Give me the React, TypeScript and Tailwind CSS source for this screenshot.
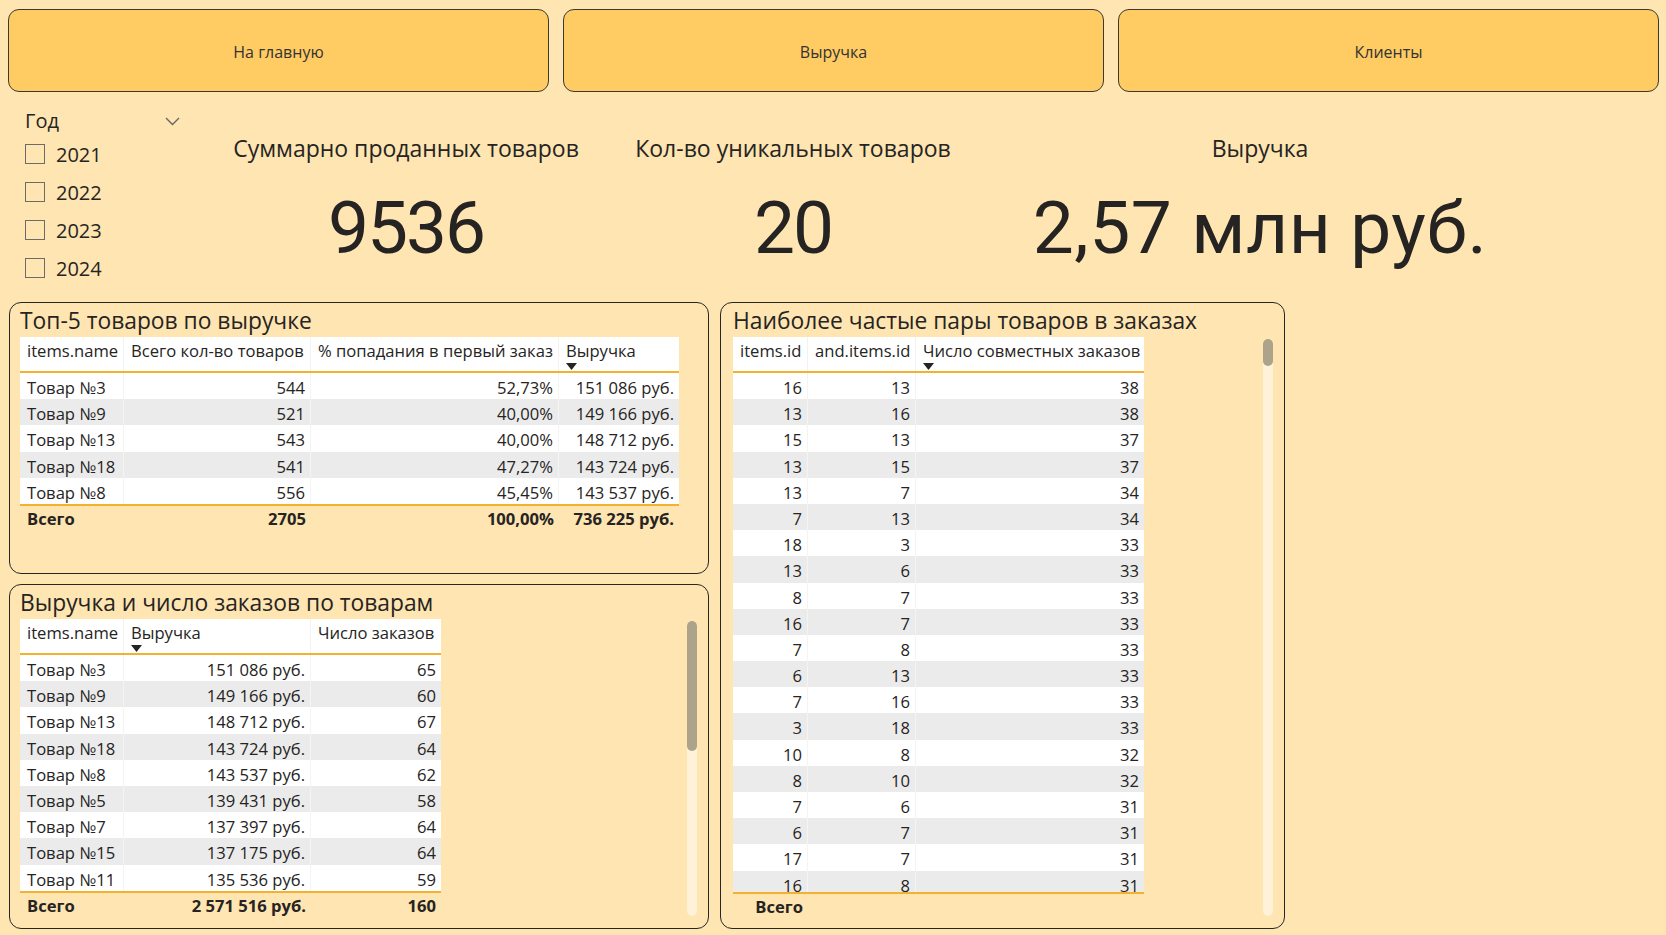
import React from "react";

type Col = { align: "l" | "r" };

const top5 = [
  ["Товар №3", "544", "52,73%", "151 086 руб."],
  ["Товар №9", "521", "40,00%", "149 166 руб."],
  ["Товар №13", "543", "40,00%", "148 712 руб."],
  ["Товар №18", "541", "47,27%", "143 724 руб."],
  ["Товар №8", "556", "45,45%", "143 537 руб."],
];

const revenue = [
  ["Товар №3", "151 086 руб.", "65"],
  ["Товар №9", "149 166 руб.", "60"],
  ["Товар №13", "148 712 руб.", "67"],
  ["Товар №18", "143 724 руб.", "64"],
  ["Товар №8", "143 537 руб.", "62"],
  ["Товар №5", "139 431 руб.", "58"],
  ["Товар №7", "137 397 руб.", "64"],
  ["Товар №15", "137 175 руб.", "64"],
  ["Товар №11", "135 536 руб.", "59"],
];

const pairs = [
  ["16", "13", "38"],
  ["13", "16", "38"],
  ["15", "13", "37"],
  ["13", "15", "37"],
  ["13", "7", "34"],
  ["7", "13", "34"],
  ["18", "3", "33"],
  ["13", "6", "33"],
  ["8", "7", "33"],
  ["16", "7", "33"],
  ["7", "8", "33"],
  ["6", "13", "33"],
  ["7", "16", "33"],
  ["3", "18", "33"],
  ["10", "8", "32"],
  ["8", "10", "32"],
  ["7", "6", "31"],
  ["6", "7", "31"],
  ["17", "7", "31"],
  ["16", "8", "31"],
];

function SortArrow() {
  return (
    <svg width="11" height="7" viewBox="0 0 11 7" className="mt-[1px]">
      <polygon points="0,0 11,0 5.5,7" fill="#252423" />
    </svg>
  );
}

function NavButton({ label }: { label: string }) {
  return (
    <button className="flex h-[83px] w-[541px] items-center justify-center rounded-[11px] border-[1.5px] border-[#3b3934] bg-[#FFCB63] pt-[2px] text-[16px] text-[#333333]">
      {label}
    </button>
  );
}

function YearSlicer() {
  return (
    <div className="w-[200px] pl-[25px] pt-[15px]">
      <div className="flex h-[28px] w-[155px] items-center justify-between">
        <span className="text-[20px] text-[#252423]">Год</span>
        <svg width="15" height="9" viewBox="0 0 15 9">
          <polyline points="1,1 7.5,7.5 14,1" fill="none" stroke="#666" strokeWidth="1.4" />
        </svg>
      </div>
      {["2021", "2022", "2023", "2024"].map((y) => (
        <div key={y} className="flex h-[38px] items-center gap-[11px]">
          <span className="h-[20px] w-[20px] border-[1.5px] border-[#6b6b6b]" />
          <span className="pt-[2px] text-[20px] text-[#252423]">{y}</span>
        </div>
      ))}
    </div>
  );
}

function Kpi({ title, value, w, valueClass }: { title: string; value: string; w: string; valueClass: string }) {
  return (
    <div className={`flex flex-col items-center pt-[40px] ${w}`}>
      <div className="h-[32px] text-[23px] leading-[32px] text-[#252423]">{title}</div>
      <div className={`mt-[24px] font-['Roboto',sans-serif] text-[73px] leading-[80px] text-[#252423] ${valueClass}`}>
        {value}
      </div>
    </div>
  );
}

function DataTable({
  grid,
  cols,
  header,
  rows,
  total,
  bodyH,
}: {
  grid: string;
  cols: Col[];
  header: { label: string; sorted?: boolean }[];
  rows: string[][];
  total: string[];
  bodyH?: string;
}) {
  return (
    <div className="text-[16.6px] text-[#252423]">
      <div className={`grid h-[36px] border-b-2 border-[#F4B12E] bg-white ${grid}`}>
        {header.map((h, i) => (
          <div
            key={i}
            className={`flex flex-col items-start pl-[7px] pr-[5px] pt-[3px] leading-[22px] ${
              i < header.length - 1 ? "border-r border-[#F2F2F2]" : ""
            }`}
          >
            <span className="whitespace-nowrap">{h.label}</span>
            {h.sorted && <SortArrow />}
          </div>
        ))}
      </div>
      <div className={`overflow-hidden ${bodyH ?? ""}`}>
        {rows.map((r, ri) => (
          <div
            key={ri}
            className={`grid h-[26.2px] ${grid} ${ri % 2 === 1 ? "bg-[#EBEBEB]" : "bg-white"}`}
          >
            {r.map((c, ci) => (
              <div
                key={ci}
                className={`flex items-center whitespace-nowrap pl-[7px] pr-[5px] pt-[3px] ${
                  cols[ci].align === "r" ? "justify-end" : ""
                } ${ci < r.length - 1 ? "border-r border-[#F4F4F4]" : ""}`}
              >
                {c}
              </div>
            ))}
          </div>
        ))}
      </div>
      <div className={`grid h-[28px] border-t-2 border-[#F4B12E] font-bold ${grid}`}>
        {total.map((c, ci) => (
          <div
            key={ci}
            className={`flex items-center whitespace-nowrap pl-[7px] pr-[5px] pt-[1px] ${
              cols[ci].align === "r" ? "justify-end" : ""
            }`}
          >
            {c}
          </div>
        ))}
      </div>
    </div>
  );
}

function Scrollbar({ h, thumb }: { h: string; thumb: string }) {
  return (
    <div className={`mt-[2px] w-[10px] rounded-full bg-[#FFF2D9] ${h}`}>
      <div className={`w-[10px] rounded-full bg-[#ADA38A] ${thumb}`} />
    </div>
  );
}

function Panel({ title, className, children }: { title: string; className: string; children: React.ReactNode }) {
  return (
    <section className={`rounded-[12px] border-[1.5px] border-[#262626] pt-[4px] ${className}`}>
      <h3 className="h-[30px] whitespace-nowrap text-[22.8px] leading-[28px] text-[#252423]">{title}</h3>
      {children}
    </section>
  );
}

export default function App() {
  return (
    <div className="h-[935px] w-[1666px] overflow-hidden bg-[#FFE5B1] font-['Open_Sans',sans-serif]">
      <div className="flex gap-[14px] pl-[8px] pt-[9px]">
        <NavButton label="На главную" />
        <NavButton label="Выручка" />
        <NavButton label="Клиенты" />
      </div>

      <div className="flex h-[210px]">
        <YearSlicer />
        <Kpi title="Суммарно проданных товаров" value="9536" w="w-[412px]" valueClass="tracking-[-2px]" />
        <Kpi title="Кол-во уникальных товаров" value="20" w="w-[362px]" valueClass="tracking-[-2px]" />
        <Kpi title="Выручка" value="2,57 млн руб." w="w-[572px]" valueClass="tracking-[0.6px]" />
      </div>

      <div className="flex gap-[11px] pl-[9px]">
        <div className="flex w-[700px] flex-col gap-[10px]">
          <Panel title="Топ-5 товаров по выручке" className="h-[272px] pl-[10px]">
            <div className="w-[659px]">
              <DataTable
                grid="grid-cols-[104px_187px_248px_120px]"
                cols={[{ align: "l" }, { align: "r" }, { align: "r" }, { align: "r" }]}
                header={[
                  { label: "items.name" },
                  { label: "Всего кол-во товаров" },
                  { label: "% попадания в первый заказ" },
                  { label: "Выручка", sorted: true },
                ]}
                rows={top5}
                total={["Всего", "2705", "100,00%", "736 225 руб."]}
              />
            </div>
          </Panel>

          <Panel title="Выручка и число заказов по товарам" className="h-[345px] pl-[10px] pr-[11px]">
            <div className="flex justify-between">
              <div className="w-[421px]">
                <DataTable
                  grid="grid-cols-[104px_187px_130px]"
                  cols={[{ align: "l" }, { align: "r" }, { align: "r" }]}
                  header={[
                    { label: "items.name" },
                    { label: "Выручка", sorted: true },
                    { label: "Число заказов" },
                  ]}
                  rows={revenue}
                  total={["Всего", "2 571 516 руб.", "160"]}
                />
              </div>
              <Scrollbar h="h-[295px]" thumb="h-[130px]" />
            </div>
          </Panel>
        </div>

        <Panel title="Наиболее частые пары товаров в заказах" className="h-[627px] w-[565px] pl-[12px] pr-[11px]">
          <div className="flex justify-between">
            <div className="w-[411px]">
              <DataTable
                grid="grid-cols-[75px_108px_228px]"
                cols={[{ align: "r" }, { align: "r" }, { align: "r" }]}
                header={[
                  { label: "items.id" },
                  { label: "and.items.id" },
                  { label: "Число совместных заказов", sorted: true },
                ]}
                rows={pairs}
                total={["Всего", "", ""]}
                bodyH="h-[519px]"
              />
            </div>
            <Scrollbar h="h-[577px]" thumb="h-[27px]" />
          </div>
        </Panel>
      </div>
    </div>
  );
}
